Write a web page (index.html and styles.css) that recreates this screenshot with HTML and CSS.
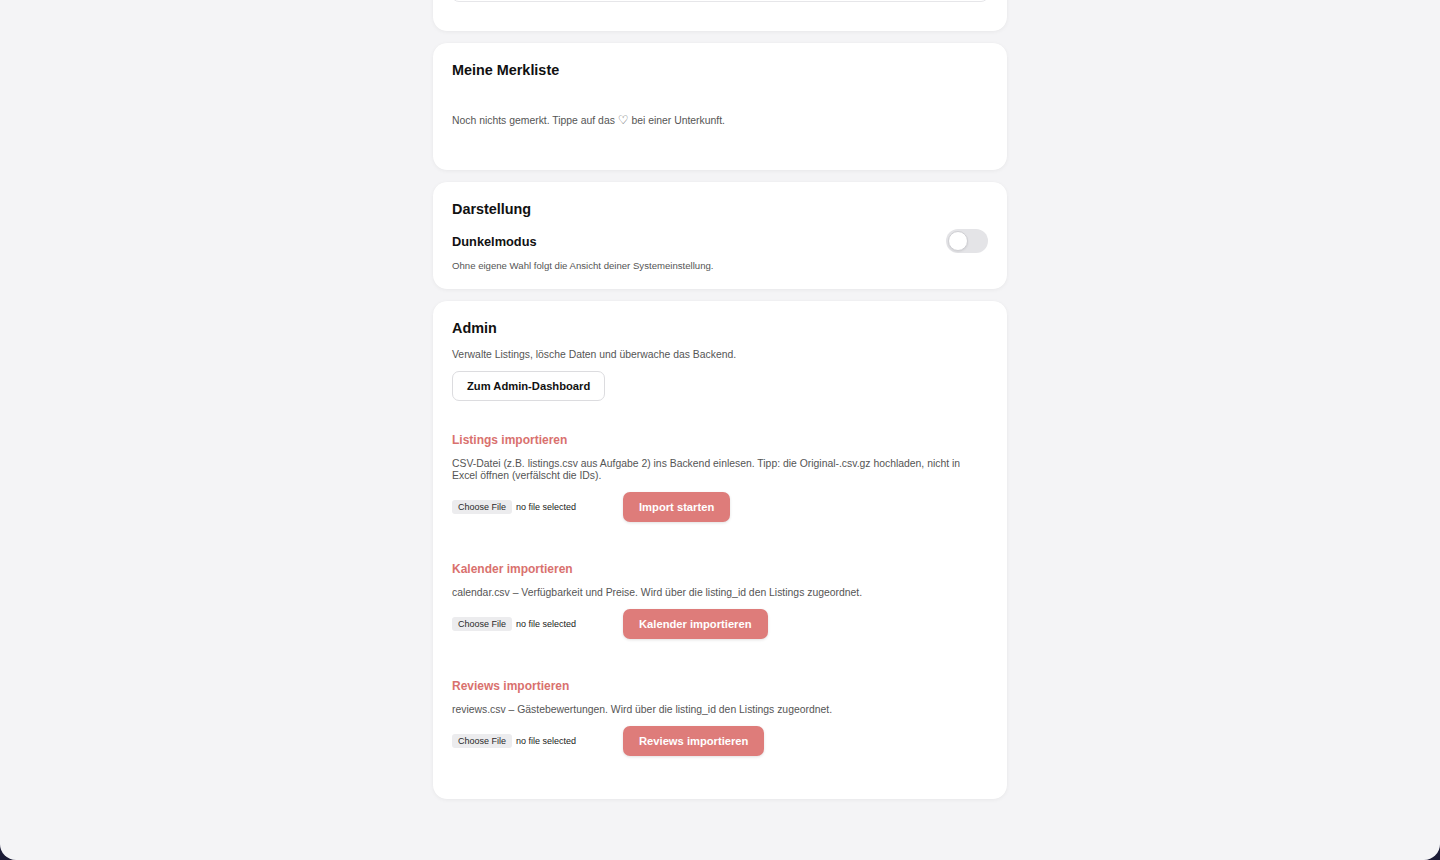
FILE: index.html
```html
<!DOCTYPE html>
<html lang="de">
<head>
<meta charset="utf-8">
<title>Profil</title>
<link rel="stylesheet" href="styles.css">
</head>
<body>
<div class="viewport">
  <main class="column">
    <section class="card card-top">
      <div class="field"></div>
    </section>

    <section class="card card-list">
      <h2 class="card-title">Meine Merkliste</h2>
      <div class="empty">
        <p class="muted">Noch nichts gemerkt. Tippe auf das <span class="heart">♡</span> bei einer Unterkunft.</p>
      </div>
    </section>

    <section class="card card-settings">
      <h2 class="card-title">Darstellung</h2>
      <div class="setting-row">
        <span class="setting-label">Dunkelmodus</span>
        <span class="toggle" role="switch" aria-checked="false"><span class="knob"></span></span>
      </div>
      <p class="hint">Ohne eigene Wahl folgt die Ansicht deiner Systemeinstellung.</p>
    </section>

    <section class="card card-admin">
      <h2 class="card-title">Admin</h2>
      <p class="muted admin-desc">Verwalte Listings, lösche Daten und überwache das Backend.</p>
      <div><button class="btn-outline" type="button">Zum Admin-Dashboard</button></div>

      <div class="imports">
        <div class="import">
          <h3 class="import-title">Listings importieren</h3>
          <p class="muted">CSV-Datei (z.B. listings.csv aus Aufgabe 2) ins Backend einlesen. Tipp: die Original-.csv.gz hochladen, nicht in Excel öffnen (verfälscht die IDs).</p>
          <div class="import-row">
            <label class="file"><span class="file-btn">Choose File</span><span class="file-name">no file selected</span></label>
            <button class="btn-primary" type="button">Import starten</button>
          </div>
        </div>

        <div class="import">
          <h3 class="import-title">Kalender importieren</h3>
          <p class="muted">calendar.csv – Verfügbarkeit und Preise. Wird über die listing_id den Listings zugeordnet.</p>
          <div class="import-row">
            <label class="file"><span class="file-btn">Choose File</span><span class="file-name">no file selected</span></label>
            <button class="btn-primary" type="button">Kalender importieren</button>
          </div>
        </div>

        <div class="import">
          <h3 class="import-title">Reviews importieren</h3>
          <p class="muted">reviews.csv – Gästebewertungen. Wird über die listing_id den Listings zugeordnet.</p>
          <div class="import-row">
            <label class="file"><span class="file-btn">Choose File</span><span class="file-name">no file selected</span></label>
            <button class="btn-primary" type="button">Reviews importieren</button>
          </div>
        </div>
      </div>
    </section>
  </main>
</div>
</body>
</html>
```

FILE: styles.css
```css
* { box-sizing: border-box; }

html, body {
  margin: 0;
  padding: 0;
  background: #1b1b36;
}

body {
  font-family: "Liberation Sans", Arial, sans-serif;
  color: #111;
}

.viewport {
  height: 860px;
  background: #f4f4f6;
  border-radius: 0 0 16px 16px;
  overflow: hidden;
}

.column {
  width: 574px;
  margin: -57px auto 0;
  display: flex;
  flex-direction: column;
  gap: 12px;
}

.card {
  background: #fff;
  border-radius: 14px;
  padding: 18px 19px 18px;
  box-shadow: 0 1px 4px rgba(0, 0, 0, 0.05), 0 0 1px rgba(0, 0, 0, 0.04);
}

.card-top {
  padding: 19px 18px 29px;
}

.field {
  height: 40px;
  border: 1.5px solid #e6e6e9;
  border-radius: 8px;
}

.card-title {
  margin: 0;
  font-size: 14.4px;
  line-height: 18px;
  font-weight: 700;
  color: #111;
}

p { margin: 0; }

.muted {
  font-size: 10.4px;
  line-height: 12px;
  color: #555;
}

.empty {
  padding: 35px 0 24px;
}

.empty .muted {
  line-height: 14px;
}

.heart {
  font-family: "DejaVu Sans", sans-serif;
  font-size: 12px;
  line-height: 1;
  color: #555;
}

.setting-row {
  margin-top: 11px;
  display: flex;
  align-items: center;
  justify-content: space-between;
  height: 24px;
}

.setting-label {
  font-size: 12.8px;
  font-weight: 700;
  color: #111;
}

.toggle {
  width: 42px;
  height: 24px;
  border-radius: 12px;
  background: #e4e4e7;
  display: flex;
  align-items: center;
  padding: 2px;
}

.knob {
  width: 20px;
  height: 20px;
  border-radius: 50%;
  background: #fff;
  border: 1.5px solid #cfcfd3;
  box-shadow: 0 1px 2px rgba(0, 0, 0, 0.08);
}

.card-settings {
  padding-bottom: 17px;
}

.hint {
  margin-top: 6px;
  font-size: 9.6px;
  line-height: 13px;
  color: #555;
}

.card-admin {
  padding-bottom: 43px;
}

.admin-desc {
  margin-top: 11px;
  line-height: 14px;
}

.btn-outline {
  margin-top: 9px;
  height: 30px;
  padding: 0 14px;
  border: 1px solid #dcdcdf;
  border-radius: 7px;
  background: #fff;
  font-family: inherit;
  font-size: 11.2px;
  font-weight: 700;
  color: #111;
}

.imports {
  margin-top: 32px;
  display: flex;
  flex-direction: column;
  gap: 40px;
}

.import-title {
  margin: 0 0 10px;
  font-size: 12px;
  line-height: 15px;
  font-weight: 700;
  color: #d9716e;
}

.import-row {
  margin-top: 10px;
  display: flex;
  align-items: center;
  gap: 10px;
}

.file {
  width: 161px;
  display: flex;
  align-items: center;
  gap: 4px;
  font-size: 9px;
  color: #1a1a1a;
}

.file-btn {
  background: #ececee;
  border-radius: 3px;
  padding: 2px 6px;
  color: #2a2a2a;
}

.btn-primary {
  height: 30px;
  padding: 0 16px;
  border: none;
  border-radius: 7px;
  background: #de7c7a;
  color: #fff;
  font-family: inherit;
  font-size: 11.2px;
  font-weight: 700;
  box-shadow: 0 1px 3px rgba(0, 0, 0, 0.12);
}
```
